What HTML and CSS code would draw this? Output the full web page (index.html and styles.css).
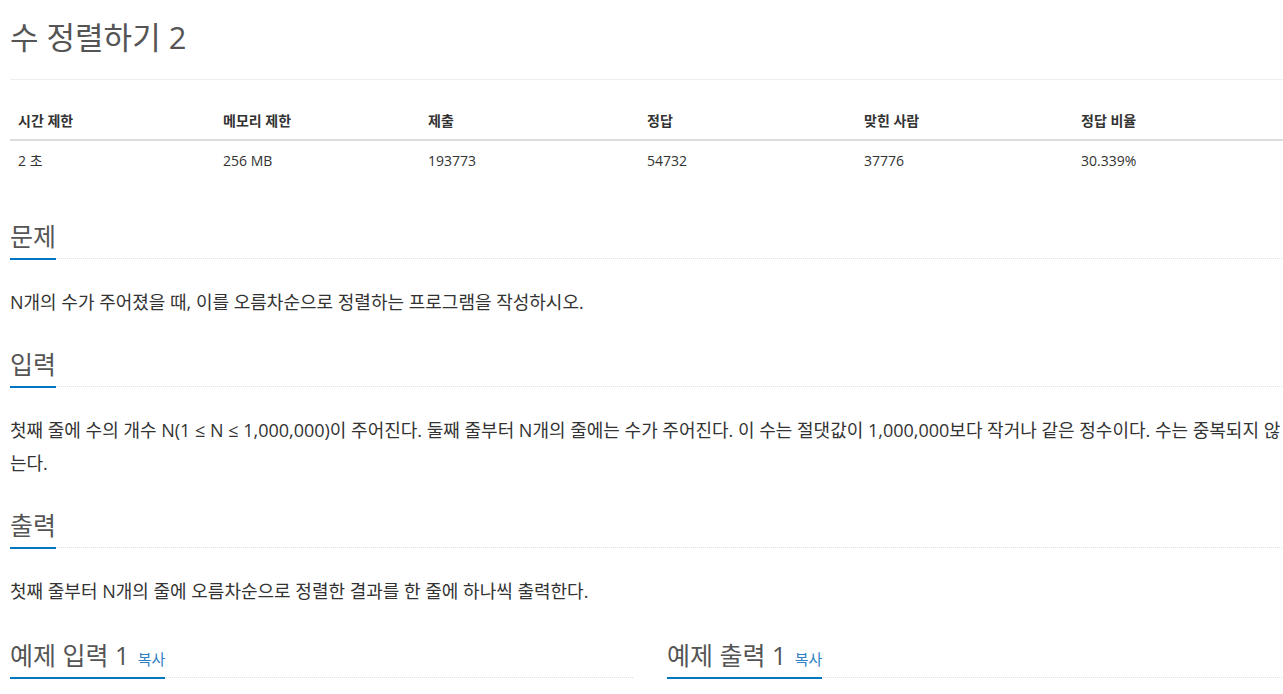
FILE: index.html
```html
<!DOCTYPE html>
<html lang="ko">

<head>
    <meta charset="UTF-8">
    <meta name="viewport" content="width=device-width, initial-scale=1.0">
    <title>수 정렬하기 2</title>
    <link rel="stylesheet" href="styles.css">
</head>

<body>
    <div class="page">
        <div class="page-header">
            <h1 id="problem_title">수 정렬하기 2</h1>
        </div>

        <table class="problem-info">
            <thead>
                <tr>
                    <th class="c1">시간 제한</th>
                    <th class="c2">메모리 제한</th>
                    <th class="c3">제출</th>
                    <th class="c4">정답</th>
                    <th class="c5">맞힌 사람</th>
                    <th>정답 비율</th>
                </tr>
            </thead>
            <tbody>
                <tr>
                    <td>2 초</td>
                    <td>256 MB</td>
                    <td>193773</td>
                    <td>54732</td>
                    <td>37776</td>
                    <td>30.339%</td>
                </tr>
            </tbody>
        </table>

        <section class="problem-section">
            <div class="headline">
                <h2>문제</h2>
            </div>
            <div class="problem-text">
                <p>N개의 수가 주어졌을 때, 이를 오름차순으로 정렬하는 프로그램을 작성하시오.</p>
            </div>
        </section>

        <section class="problem-section">
            <div class="headline">
                <h2>입력</h2>
            </div>
            <div class="problem-text">
                <p>첫째 줄에 수의 개수 N(1 ≤ N ≤ 1,000,000)이 주어진다. 둘째 줄부터 N개의 줄에는 수가 주어진다. 이 수는 절댓값이 1,000,000보다 작거나 같은 정수이다. 수는 중복되지 않는다.</p>
            </div>
        </section>

        <section class="problem-section">
            <div class="headline">
                <h2>출력</h2>
            </div>
            <div class="problem-text">
                <p>첫째 줄부터 N개의 줄에 오름차순으로 정렬한 결과를 한 줄에 하나씩 출력한다.</p>
            </div>
        </section>

        <div class="samples">
            <section class="problem-section">
                <div class="headline">
                    <h2>예제 입력 1 <button type="button" class="copy-button">복사</button></h2>
                </div>
            </section>
            <section class="problem-section">
                <div class="headline">
                    <h2>예제 출력 1 <button type="button" class="copy-button">복사</button></h2>
                </div>
            </section>
        </div>
    </div>
</body>

</html>
```

FILE: styles.css
```css
html,
body {
    overflow-x: hidden;
}

body {
    margin: 0;
    background-color: #fff;
    color: #333;
    font-family: "Open Sans", "Noto Sans CJK KR", sans-serif;
    font-size: 14px;
}

.page {
    width: 1280px;
    padding-left: 10px;
}

.page-header {
    padding-top: 21px;
    padding-bottom: 9px;
    border-bottom: 1px solid #eee;
    margin-bottom: 23px;
}

.page-header h1 {
    margin: 0 0 16px 0;
    font-size: 31px;
    font-weight: 400;
    line-height: 33px;
    color: #555;
}

/* margin collapses with the first section's margin-top */
.problem-info {
    width: 100%;
    border-collapse: collapse;
    margin-bottom: 44px;
}

.problem-info th,
.problem-info td {
    padding: 8px;
    line-height: 20px;
    text-align: left;
    vertical-align: top;
}

.problem-info td {
    padding-top: 10px;
    padding-bottom: 6px;
}

.problem-info th {
    font-weight: 700;
    border-bottom: 2px solid #ddd;
}

.problem-info .c1,
.problem-info .c2 {
    width: 189px;
}

.problem-info .c3 {
    width: 203px;
}

.problem-info .c4,
.problem-info .c5 {
    width: 201px;
}

.problem-section {
    margin-top: 30px;
}

.headline {
    border-bottom: 1px dotted #ddd;
    margin-bottom: 27px;
}

.headline h2 {
    display: inline-block;
    margin: 0 0 -2px 0;
    padding-bottom: 7px;
    border-bottom: 2px solid #0076c0;
    font-size: 25px;
    font-weight: 400;
    line-height: 30px;
    color: #555;
}

.problem-text p {
    margin: 0;
    font-size: 18px;
    line-height: 33px;
}

.samples {
    display: grid;
    grid-template-columns: 623px 623px;
    column-gap: 34px;
}

.samples .problem-section {
    margin-top: 32px;
}

.copy-button {
    border: none;
    background: none;
    padding: 0;
    margin-left: 2px;
    font-family: inherit;
    font-size: 15px;
    color: #2f7fc4;
    cursor: pointer;
}
```
